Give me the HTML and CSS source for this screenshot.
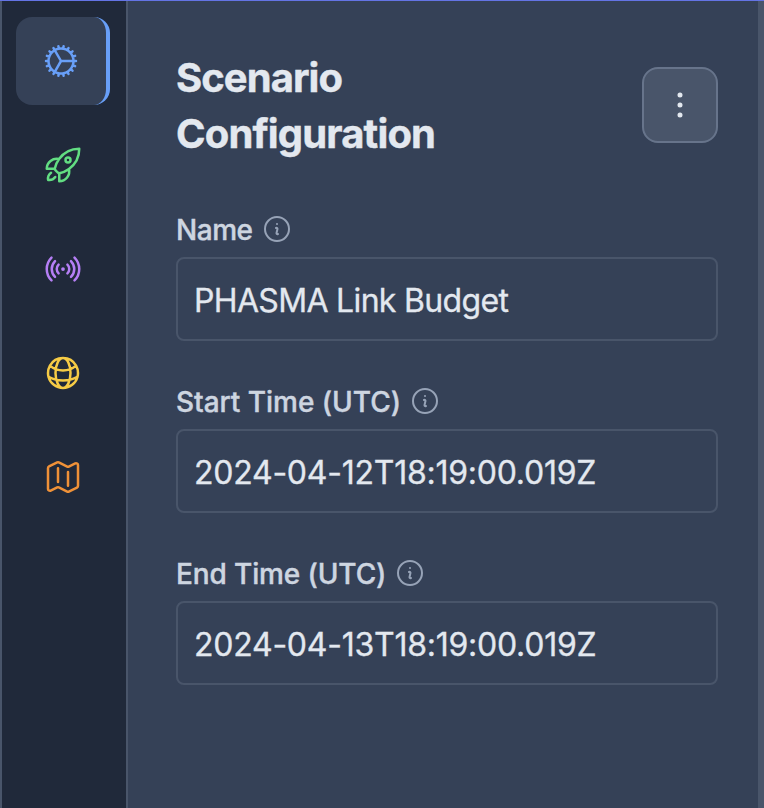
FILE: index.html
```html
<!DOCTYPE html>
<html lang="en">
<head>
<meta charset="utf-8">
<title>Scenario Configuration</title>
<link rel="stylesheet" href="styles.css">
</head>
<body>
<div class="app">
  <nav class="sidebar">
    <a class="nav-item active"><svg class="icon" viewBox="0 0 24 24"><path d="M4.5 12a7.5 7.5 0 0 0 15 0m-15 0a7.5 7.5 0 1 1 15 0m-15 0H3m16.5 0H21m-1.5 0H12m-8.457 3.077 1.41-.513m14.095-5.13 1.41-.513M5.106 17.785l1.15-.964m11.49-9.642 1.149-.964M7.501 19.795l.75-1.3m7.5-12.99.75-1.3m-6.063 16.658.26-1.477m2.605-14.772.26-1.477m0 17.726-.26-1.477M10.698 4.614l-.26-1.477M16.5 19.794l-.75-1.299M7.5 4.205 12 12m6.894 5.785-1.149-.964M6.256 7.178l-1.15-.964m15.352 8.864-1.41-.513M4.954 9.435l-1.41-.514M12.002 12l-3.75 6.495"/></svg></a>
    <a class="nav-item green"><svg class="icon" viewBox="0 0 24 24"><path d="M15.59 14.37a6 6 0 0 1-5.84 7.38v-4.8m5.84-2.58a14.98 14.98 0 0 0 6.16-12.12A14.98 14.98 0 0 0 9.631 8.41m5.96 5.96a14.926 14.926 0 0 1-5.841 2.58m-.119-8.54a6 6 0 0 0-7.381 5.84h4.8m2.581-5.84a14.927 14.927 0 0 0-2.58 5.84m2.699 2.7c-.103.021-.207.041-.311.06a15.09 15.09 0 0 1-2.448-2.448 14.9 14.9 0 0 1 .06-.312m-2.24 2.39a4.493 4.493 0 0 0-1.757 4.306 4.493 4.493 0 0 0 4.306-1.758M16.5 9a1.5 1.5 0 1 1-3 0 1.5 1.5 0 0 1 3 0Z"/></svg></a>
    <a class="nav-item purple"><svg class="icon" viewBox="0 0 24 24"><path d="M9.348 14.652a3.75 3.75 0 0 1 0-5.304m5.304 0a3.75 3.75 0 0 1 0 5.304m-7.425 2.121a6.75 6.75 0 0 1 0-9.546m9.546 0a6.75 6.75 0 0 1 0 9.546M5.106 18.894c-3.808-3.807-3.808-9.98 0-13.788m13.788 0c3.808 3.807 3.808 9.98 0 13.788M12 12h.008v.008H12V12Zm.375 0a.375.375 0 1 1-.75 0 .375.375 0 0 1 .75 0Z"/></svg></a>
    <a class="nav-item yellow"><svg class="icon" viewBox="0 0 24 24"><path d="M12 21a9.004 9.004 0 0 0 8.716-6.747M12 21a9.004 9.004 0 0 1-8.716-6.747M12 21c2.485 0 4.5-4.03 4.5-9S14.485 3 12 3m0 18c-2.485 0-4.5-4.03-4.5-9S9.515 3 12 3m0 0a8.997 8.997 0 0 1 7.843 4.582M12 3a8.997 8.997 0 0 0-7.843 4.582m15.686 0A11.953 11.953 0 0 1 12 10.5c-2.998 0-5.74-1.1-7.843-2.918m15.686 0A8.959 8.959 0 0 1 21 12c0 .778-.099 1.533-.284 2.253m0 0A17.919 17.919 0 0 1 12 16.5c-3.162 0-6.133-.815-8.716-2.247m0 0A9.015 9.015 0 0 1 3 12c0-1.605.42-3.113 1.157-4.418"/></svg></a>
    <a class="nav-item orange"><svg class="icon" viewBox="0 0 24 24"><path d="M9 6.75V15m6-6v8.25m.503 3.498 4.875-2.437c.381-.19.622-.58.622-1.006V4.82c0-.836-.88-1.38-1.628-1.006l-3.869 1.934c-.317.159-.69.159-1.006 0L9.503 3.252a1.125 1.125 0 0 0-1.006 0L3.622 5.689C3.24 5.88 3 6.27 3 6.695V19.18c0 .836.88 1.38 1.628 1.006l3.869-1.934c.317-.159.69-.159 1.006 0l4.994 2.497c.317.158.69.158 1.006 0Z"/></svg></a>
  </nav>
  <main class="panel">
    <header class="header">
      <h1 class="title">Scenario <span class="title-end">Configuration</span></h1>
      <button class="menu" aria-label="Menu"><svg class="icon" viewBox="0 0 24 24"><path d="M12 6.75a.75.75 0 1 1 0-1.5.75.75 0 0 1 0 1.5ZM12 12.75a.75.75 0 1 1 0-1.5.75.75 0 0 1 0 1.5ZM12 18.75a.75.75 0 1 1 0-1.5.75.75 0 0 1 0 1.5Z"/></svg></button>
    </header>
    <div class="field">
      <div class="label"><span class="label-name">Name</span><svg class="info" viewBox="0 0 24 24"><path d="m11.25 11.25.041-.02a.75.75 0 0 1 1.063.852l-.708 2.836a.75.75 0 0 0 1.063.853l.041-.021M21 12a9 9 0 1 1-18 0 9 9 0 0 1 18 0Zm-9-3.75h.008v.008H12V8.25Z"/></svg></div>
      <div class="input"><span class="value-name">PHASMA Link Budget</span></div>
    </div>
    <div class="field">
      <div class="label"><span class="label-start">Start Time (UTC)</span><svg class="info" viewBox="0 0 24 24"><path d="m11.25 11.25.041-.02a.75.75 0 0 1 1.063.852l-.708 2.836a.75.75 0 0 0 1.063.853l.041-.021M21 12a9 9 0 1 1-18 0 9 9 0 0 1 18 0Zm-9-3.75h.008v.008H12V8.25Z"/></svg></div>
      <div class="input"><span class="value-time">2024-04-12T18:19:00.019Z</span></div>
    </div>
    <div class="field">
      <div class="label"><span class="label-end">End Time (UTC)</span><svg class="info" viewBox="0 0 24 24"><path d="m11.25 11.25.041-.02a.75.75 0 0 1 1.063.852l-.708 2.836a.75.75 0 0 0 1.063.853l.041-.021M21 12a9 9 0 1 1-18 0 9 9 0 0 1 18 0Zm-9-3.75h.008v.008H12V8.25Z"/></svg></div>
      <div class="input"><span class="value-time">2024-04-13T18:19:00.019Z</span></div>
    </div>
  </main>
</div>
</body>
</html>
```
FILE: styles.css
```css
* { box-sizing: border-box; }
body { margin: 0; font-family: Inter, sans-serif; background: #354157; overflow: hidden; }
.app { display: flex; height: 808px; border-top: 1px solid #6474e5; }
.sidebar {
  width: 128px; flex: none; display: flex; flex-direction: column; gap: 16px;
  padding: 16px 16px 0 14px; background: #20293a;
  border-left: 2px solid #49556a; border-right: 2px solid #49556a;
}
.nav-item { width: 94px; height: 88px; display: flex; align-items: center; justify-content: center; border-radius: 16px; }
.active { background: #354157; border-right: 4px solid #689ff8; color: #689ff8; }
.green { color: #62dd82; }
.purple { color: #b57ff5; }
.yellow { color: #f6cb45; }
.orange { color: #ef9138; }
svg { display: block; flex: none; fill: none; stroke: currentColor; stroke-width: 1.5; stroke-linecap: round; stroke-linejoin: round; }
.icon { width: 40px; height: 40px; }
.panel { flex: 1; padding: 48px 40px 0 48px; border-right: 6px solid #49556a; }
.header { display: flex; align-items: center; justify-content: space-between; height: 112px; margin-bottom: 48px; }
.title { margin: 0; padding-top: 2px; width: 300px; font-size: 40px; line-height: 56px; font-weight: 700; color: #e3e8ef; letter-spacing: -0.95px; -webkit-text-stroke: 0.4px; }
.title-end { display: block; letter-spacing: -0.85px; }
.menu { width: 76px; height: 76px; padding: 0; display: flex; align-items: center; justify-content: center; border: 2px solid #67748b; border-radius: 16px; background: #49556a; color: #e3e8ef; }
.field { margin-bottom: 40px; }
.label { display: flex; align-items: center; gap: 8px; height: 40px; margin-bottom: 8px; font-size: 28px; font-weight: 500; line-height: 40px; color: #cdd5e0; white-space: nowrap; }
.label span { padding-top: 2px; -webkit-text-stroke: 0.4px; }
.label-name { letter-spacing: -0.45px; }
.label-start { letter-spacing: -0.03px; }
.label-end { letter-spacing: -0.12px; }
.info { width: 32px; height: 32px; color: #97a3b7; }
.input { display: flex; align-items: center; height: 84px; padding: 2px 16px 0; border: 2px solid #49556a; border-radius: 8px; font-size: 32px; color: #e3e8ef; white-space: nowrap; -webkit-text-stroke: 0.3px; }
.value-name { letter-spacing: -0.67px; }
.value-time { letter-spacing: -0.25px; }
```
